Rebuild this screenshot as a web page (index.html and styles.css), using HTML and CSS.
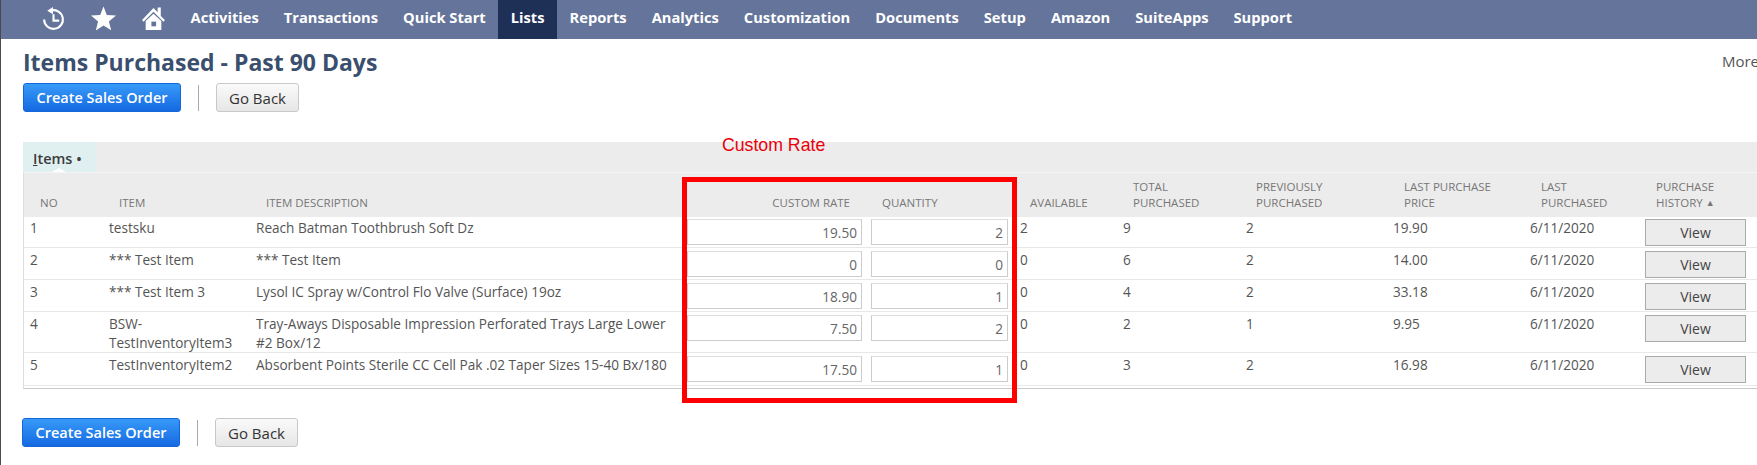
FILE: index.html
```html
<!DOCTYPE html>
<html lang="en">
<head>
  <meta charset="UTF-8" />
  <title>Items Purchased - Past 90 Days</title>
  <link rel="stylesheet" href="styles.css">
</head>
<body>
  <nav class="nav">
    <div class="nav-icons">
      <svg class="nav-icon" viewBox="0 0 24 24" fill="none" stroke="#fff" stroke-width="2">
        <path d="M3 13a9 9 0 1 0 6-8.5"/>
        <path d="M12 8v6h5.5"/>
        <path d="M11.5 1v7L6 4.5z" fill="#fff" stroke="none"/>
      </svg>
      <svg class="nav-icon" viewBox="0 0 24 24" fill="#fff">
        <path d="M12 .5l3.2 8.2 8.8.5-6.8 5.6 2.2 8.6L12 18.6l-7.4 4.8 2.2-8.6L0 9.2l8.8-.5z"/>
      </svg>
      <svg class="nav-icon" viewBox="0 0 24 24" fill="#fff">
        <path d="M12 7.5l7.5 7V23h-15v-8.500z"/>
        <path d="M12 2L1 13.500l1.500 1.500L12 5.500l9.500 9.500 1.500-1.500-4-4V1.500h-3v4.500L12 2z"/>
        <rect x="10" y="15" width="4.500" height="4.500" fill="#64749a"/>
      </svg>
    </div>
    <a class="nav-link">Activities</a>
    <a class="nav-link">Transactions</a>
    <a class="nav-link">Quick Start</a>
    <a class="nav-link active">Lists</a>
    <a class="nav-link">Reports</a>
    <a class="nav-link">Analytics</a>
    <a class="nav-link">Customization</a>
    <a class="nav-link">Documents</a>
    <a class="nav-link">Setup</a>
    <a class="nav-link">Amazon</a>
    <a class="nav-link">SuiteApps</a>
    <a class="nav-link">Support</a>
  </nav>

  <main class="page">
    <div class="title-row">
      <h1>Items Purchased - Past 90 Days</h1>
      <span class="more">More</span>
    </div>

    <div class="toolbar">
      <button class="btn btn-primary">Create Sales Order</button>
      <span class="toolbar-sep"></span>
      <button class="btn">Go Back</button>
    </div>

    <section class="items">
      <div class="tabs">
        <div class="tab"><u>I</u>tems &bull;</div>
        <span class="note">Custom Rate</span>
      </div>

      <div class="table-wrap">
        <table>
          <colgroup>
            <col class="c-no"><col class="c-item"><col class="c-desc"><col class="c-rate"><col class="c-qty">
            <col class="c-avail"><col class="c-total"><col class="c-prev"><col class="c-price"><col class="c-last"><col class="c-hist">
          </colgroup>
          <thead>
            <tr>
              <th>No</th>
              <th>Item</th>
              <th>Item Description</th>
              <th class="th-rate">Custom Rate</th>
              <th class="th-qty">Quantity</th>
              <th>Available</th>
              <th>Total<br>Purchased</th>
              <th>Previously<br>Purchased</th>
              <th class="th-late">Last Purchase<br>Price</th>
              <th class="th-late">Last<br>Purchased</th>
              <th class="th-late">Purchase<br>History <span class="sort">&#9650;</span></th>
            </tr>
          </thead>
          <tbody>
            <tr class="first">
              <td>1</td>
              <td>testsku</td>
              <td>Reach Batman Toothbrush Soft Dz</td>
              <td class="td-rate"><input value="19.50"></td>
              <td class="td-qty"><input value="2"></td>
              <td>2</td><td>9</td><td>2</td><td>19.90</td><td>6/11/2020</td>
              <td class="td-view"><button class="view">View</button></td>
            </tr>
            <tr>
              <td>2</td>
              <td>*** Test Item</td>
              <td>*** Test Item</td>
              <td class="td-rate"><input value="0"></td>
              <td class="td-qty"><input value="0"></td>
              <td>0</td><td>6</td><td>2</td><td>14.00</td><td>6/11/2020</td>
              <td class="td-view"><button class="view">View</button></td>
            </tr>
            <tr>
              <td>3</td>
              <td>*** Test Item 3</td>
              <td>Lysol IC Spray w/Control Flo Valve (Surface) 19oz</td>
              <td class="td-rate"><input value="18.90"></td>
              <td class="td-qty"><input value="1"></td>
              <td>0</td><td>4</td><td>2</td><td>33.18</td><td>6/11/2020</td>
              <td class="td-view"><button class="view">View</button></td>
            </tr>
            <tr>
              <td>4</td>
              <td>BSW-TestInventoryItem3</td>
              <td>Tray-Aways Disposable Impression Perforated Trays Large Lower #2 Box/12</td>
              <td class="td-rate"><input value="7.50"></td>
              <td class="td-qty"><input value="2"></td>
              <td>0</td><td>2</td><td>1</td><td>9.95</td><td>6/11/2020</td>
              <td class="td-view"><button class="view">View</button></td>
            </tr>
            <tr>
              <td>5</td>
              <td>TestInventoryItem2</td>
              <td>Absorbent Points Sterile CC Cell Pak .02 Taper Sizes 15-40 Bx/180</td>
              <td class="td-rate"><input value="17.50"></td>
              <td class="td-qty"><input value="1"></td>
              <td>0</td><td>3</td><td>2</td><td>16.98</td><td>6/11/2020</td>
              <td class="td-view"><button class="view">View</button></td>
            </tr>
          </tbody>
        </table>
        <div class="highlight"></div>
      </div>
    </section>

    <div class="toolbar toolbar-bottom">
      <button class="btn btn-primary">Create Sales Order</button>
      <span class="toolbar-sep"></span>
      <button class="btn">Go Back</button>
    </div>
  </main>
</body>
</html>
```

FILE: styles.css
```css
html, body {
  margin: 0;
  height: 100%;
  overflow: hidden;
  background: white;
}
body {
  font-family: "Open Sans", sans-serif;
  font-size: 13.6px;
  color: #555;
  border-left: 1px solid #4a4a4a;
}

/* top menu */
.nav {
  display: flex;
  height: 39px;
  background: #64749a;
}
.nav-icons {
  display: flex;
  align-items: center;
  gap: 25px;
  margin: 0 12px 2px 40px;
}
.nav-icon {
  width: 25px;
  height: 25px;
}
.nav-link {
  display: flex;
  align-items: center;
  padding: 0 12.5px 6px;
  color: white;
  font-size: 14.7px;
  font-weight: 700;
}
.nav-link.active {
  background: #1f3056;
}

/* page */
.page {
  padding-left: 22px;
}
.title-row {
  display: flex;
  justify-content: space-between;
  align-items: center;
  height: 44px;
}
h1 {
  margin: 2px 0 0;
  font-size: 23px;
  font-weight: 700;
  color: #3a4f6e;
}
.more {
  font-size: 15px;
  color: #555;
  margin-right: -2px;
}

.toolbar {
  display: flex;
  align-items: center;
  height: 29px;
}
.toolbar-bottom {
  margin: 29px 0 0 -1px;
}
.toolbar-sep {
  width: 1px;
  height: 26px;
  margin: 0 17px;
  background: #aaa;
}
.btn {
  width: 83px;
  height: 29px;
  padding: 0;
  border: 1px solid #c8c8c8;
  border-radius: 3px;
  background: linear-gradient(#fafafa, #e6e6e6);
  font-family: inherit;
  font-size: 15px;
  color: #333;
}
.btn-primary {
  width: 158px;
  border-color: #1467d8;
  background: linear-gradient(#379af8, #1569e2);
  color: white;
  font-size: 14.500px;
  font-weight: 600;
}

/* items sublist */
.items {
  margin-top: 30px;
}
.tabs {
  position: relative;
  height: 30px;
  background: #ececec;
}
.tab {
  position: relative;
  width: 73px;
  height: 30px;
  box-sizing: border-box;
  padding: 7px 0 0 10px;
  background: #e0f0f0;
  font-size: 14.500px;
  line-height: 19px;
  font-weight: 600;
  color: #3c3c3c;
}
.tab::after {
  content: "";
  position: absolute;
  left: 29px;
  bottom: 0;
  border: 7px solid transparent;
  border-top: 0;
  border-bottom: 4px solid white;
}
.note {
  position: absolute;
  left: 699px;
  top: -7px;
  font-family: "Liberation Sans", sans-serif;
  font-size: 17.700px;
  color: #e8000a;
}

.table-wrap {
  position: relative;
  padding-bottom: 2px;
  border-left: 1px solid #ddd;
  border-top: 1px solid #f4f4f4;
  border-bottom: 1px solid #ccc;
}
.highlight {
  position: absolute;
  left: 658px;
  top: 4px;
  width: 325px;
  height: 216px;
  border: 5px solid #f00;
}
table {
  width: 1733px;
  table-layout: fixed;
  border-collapse: collapse;
}
.c-no { width: 79px; }
.c-item { width: 147px; }
.c-desc { width: 433px; }
.c-rate { width: 184px; }
.c-qty { width: 147px; }
.c-avail { width: 103px; }
.c-total { width: 123px; }
.c-prev { width: 147px; }
.c-price { width: 137px; }
.c-last { width: 115px; }
.c-hist { width: 118px; }

th {
  height: 44px;
  box-sizing: border-box;
  padding: 0 0 6px 16px;
  background: #ececec;
  vertical-align: bottom;
  text-align: left;
  font-size: 11.500px;
  font-weight: 400;
  line-height: 16px;
  text-transform: uppercase;
  color: #777;
}
th.th-rate {
  padding-right: 17px;
  text-align: right;
}
th.th-qty {
  padding-left: 15px;
}
th.th-late {
  padding-left: 17px;
}
.sort {
  font-size: 9px;
  vertical-align: 1px;
}
td {
  padding: 3px 10px 0 6px;
  vertical-align: top;
  line-height: 18.5px;
  border-bottom: 1px solid #e8e8e8;
}
tr.first td {
  padding-top: 2px;
}
td.td-rate {
  padding: 3px 5px 1px 4px;
}
td.td-qty {
  padding: 3px 6px 1px 4px;
}
td.td-view {
  padding: 3px 11px 1px 6px;
}
tbody tr:last-child td {
  padding-bottom: 3px;
}
tbody tr:last-child td.td-view {
  padding-bottom: 2px;
}
input {
  display: block;
  width: 100%;
  height: 26px;
  box-sizing: border-box;
  padding: 0 4px 0 0;
  border: 1px solid #ccc;
  border-top-color: #ddd;
  font-family: inherit;
  font-size: 13.6px;
  color: #666;
  text-align: right;
}
.view {
  display: block;
  width: 100%;
  height: 27px;
  padding: 0;
  border: 1px solid #aaa;
  background: #ececec;
  font-family: inherit;
  font-size: 14px;
  color: #444;
}
```
